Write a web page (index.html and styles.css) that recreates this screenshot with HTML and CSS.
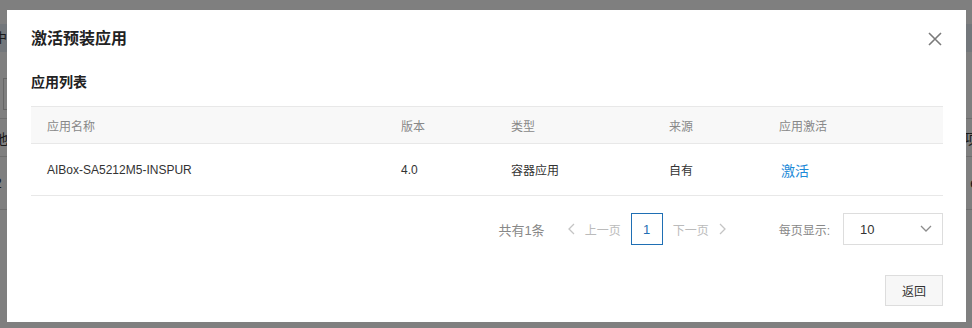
FILE: index.html
```html
<!DOCTYPE html>
<html lang="zh-CN">

<head>
  <meta charset="UTF-8">
  <meta name="viewport" content="width=device-width, initial-scale=1.0">
  <title>激活预装应用</title>
  <link rel="stylesheet" href="styles.css">
</head>

<body>
  <div class="page">
    <div class="page-head"><span class="lead">中护</span></div>
    <div class="page-tools"><span class="tool-box"></span></div>
    <div class="page-row head"><span class="lead">地址</span><span class="tail">项</span></div>
    <div class="page-row"><span class="lead">2</span><span class="tail">e</span></div>
  </div>

  <div class="mask"></div>

  <div class="modal">
    <div class="modal-header">
      <h1>激活预装应用</h1>
      <button class="close" type="button" aria-label="关闭">
        <svg width="14" height="14" viewBox="0 0 14 14">
          <path d="M1 1L13 13M13 1L1 13" stroke="#7a7a7a" stroke-width="1.6" fill="none" />
        </svg>
      </button>
    </div>

    <h2>应用列表</h2>

    <table class="grid">
      <thead>
        <tr>
          <th class="c-name">应用名称</th>
          <th class="c-ver">版本</th>
          <th class="c-type">类型</th>
          <th class="c-src">来源</th>
          <th>应用激活</th>
        </tr>
      </thead>
      <tbody>
        <tr>
          <td>AIBox-SA5212M5-INSPUR</td>
          <td>4.0</td>
          <td>容器应用</td>
          <td>自有</td>
          <td><a class="link" href="#">激活</a></td>
        </tr>
      </tbody>
    </table>

    <div class="pager">
      <span class="total">共有1条</span>
      <span class="nav prev">
        <svg width="8" height="12" viewBox="0 0 8 12">
          <polyline points="7,1 2,6 7,11" stroke="#c4c4c4" stroke-width="1.3" fill="none" />
        </svg>
        上一页
      </span>
      <span class="page-num">1</span>
      <span class="nav next">
        下一页
        <svg width="8" height="12" viewBox="0 0 8 12">
          <polyline points="1,1 6,6 1,11" stroke="#c4c4c4" stroke-width="1.3" fill="none" />
        </svg>
      </span>
      <span class="size-label">每页显示:</span>
      <span class="select">
        10
        <svg width="12" height="8" viewBox="0 0 12 8">
          <polyline points="1,1 6,6 11,1" stroke="#8c8c8c" stroke-width="1.3" fill="none" />
        </svg>
      </span>
    </div>

    <div class="modal-footer">
      <button class="btn" type="button">返回</button>
    </div>
  </div>
</body>

</html>
```

FILE: styles.css
```css
body,
html {
  margin: 0;
  padding: 0;
  font-family: "Liberation Sans", "Noto Sans CJK SC", sans-serif;
  font-size: 12px;
  color: #333;
  background-color: #fff;
  overflow: hidden;
}

/* page behind the dialog */
.page {
  height: 328px;
  padding-top: 24px;
  box-sizing: border-box;
}

.page-head {
  height: 28px;
  line-height: 28px;
  background-color: #e6eef6;
  font-size: 13px;
  color: #333;
}

.page-tools {
  height: 66px;
  padding-top: 26px;
  box-sizing: border-box;
}

.tool-box {
  display: block;
  width: 60px;
  height: 32px;
  margin-left: 3px;
  border: 1px solid #ccc;
  box-sizing: border-box;
}

.page-row {
  display: flex;
  justify-content: space-between;
  align-items: center;
  height: 52px;
  border-bottom: 1px solid #ddd;
  font-size: 14px;
}

.page-row.head {
  height: 37px;
  border-top: 1px solid #ddd;
}

.lead {
  margin-left: -6px;
}

.tail {
  margin-right: -6px;
}

.mask {
  position: fixed;
  inset: 0;
  background-color: rgba(0, 0, 0, .5);
}

/* dialog */
.modal {
  position: fixed;
  left: 7px;
  top: 10px;
  width: 959px;
  height: 312px;
  padding: 19px 23px 0 24px;
  box-sizing: border-box;
  background-color: #fff;
}

.modal-header {
  display: flex;
  justify-content: space-between;
  align-items: center;
  height: 20px;
}

.modal-header h1 {
  margin: 0;
  font-size: 16px;
  font-weight: 600;
  line-height: 20px;
  color: #222;
}

.close {
  display: flex;
  padding: 0;
  margin-right: 1px;
  border: none;
  background: none;
}

h2 {
  margin: 23px 0 0;
  font-size: 14px;
  font-weight: 600;
  line-height: 20px;
  color: #222;
}

.grid {
  width: 912px;
  margin-top: 14px;
  border-collapse: collapse;
  table-layout: fixed;
}

.grid th,
.grid td {
  padding: 0 0 0 16px;
  text-align: left;
  border-bottom: 1px solid #e8e8e8;
}

.grid th {
  height: 36px;
  border-top: 1px solid #e8e8e8;
  background-color: #f8f8f8;
  font-weight: normal;
  color: #888;
}

.grid td {
  height: 51px;
  color: #333;
}

.c-name {
  width: 338px;
}

.c-ver {
  width: 94px;
}

.c-type {
  width: 142px;
}

.c-src {
  width: 94px;
}

.link {
  margin-left: 2px;
  font-size: 14px;
  color: #1d8ad8;
  text-decoration: none;
}

/* pagination */
.pager {
  display: flex;
  justify-content: flex-end;
  align-items: center;
  margin-top: 17px;
  height: 32px;
  color: #888;
}

.total {
  font-size: 13px;
  margin-right: 22px;
}

.nav {
  display: flex;
  align-items: center;
  gap: 10px;
  color: #bbb;
}

.page-num {
  display: flex;
  justify-content: center;
  align-items: center;
  width: 32px;
  height: 32px;
  margin: 0 10px;
  border: 1px solid #1f6fb4;
  box-sizing: border-box;
  color: #1f6fb4;
  font-size: 13px;
}

.size-label {
  margin-left: 52px;
  margin-right: 13px;
}

.select {
  display: flex;
  justify-content: space-between;
  align-items: center;
  width: 100px;
  height: 32px;
  padding: 0 10px 0 16px;
  border: 1px solid #ddd;
  box-sizing: border-box;
  font-size: 13px;
  color: #333;
}

.modal-footer {
  display: flex;
  justify-content: flex-end;
  margin-top: 30px;
}

.btn {
  width: 58px;
  height: 31px;
  padding: 0;
  border: 1px solid #ddd;
  background-color: #f7f7f7;
  font-family: inherit;
  font-size: 12px;
  color: #333;
}
```
